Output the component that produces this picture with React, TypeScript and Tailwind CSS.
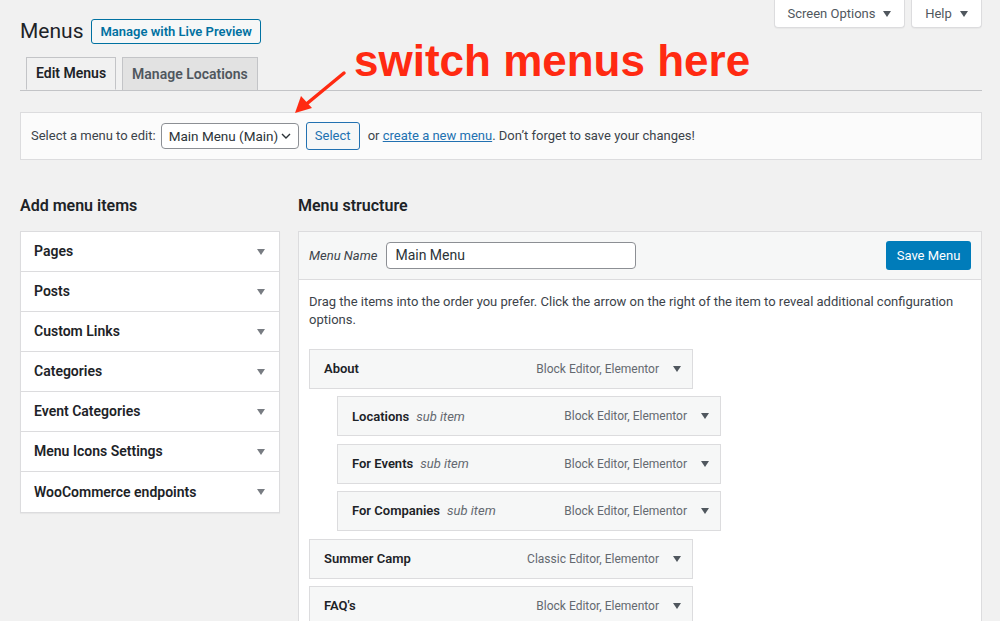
import React from 'react';

const ui = { fontFamily: 'Roboto, "Liberation Sans", Arial, sans-serif' };

const addItems = [
  'Pages',
  'Posts',
  'Custom Links',
  'Categories',
  'Event Categories',
  'Menu Icons Settings',
  'WooCommerce endpoints',
];

interface MenuItem {
  title: string;
  sub?: boolean;
  type: string;
}

const menuItems: MenuItem[] = [
  { title: 'About', type: 'Block Editor, Elementor' },
  { title: 'Locations', sub: true, type: 'Block Editor, Elementor' },
  { title: 'For Events', sub: true, type: 'Block Editor, Elementor' },
  { title: 'For Companies', sub: true, type: 'Block Editor, Elementor' },
  { title: 'Summer Camp', type: 'Classic Editor, Elementor' },
  { title: "FAQ's", type: 'Block Editor, Elementor' },
];

// small solid triangle used by WP toggles
const Caret = ({ className = '' }: { className?: string }) => (
  <svg width="8" height="6" viewBox="0 0 8 6" className={className}>
    <path d="M0 0h8L4 6z" fill="currentColor" />
  </svg>
);

const App = () => {
  return (
    <div className="relative h-[621px] overflow-hidden bg-[#f1f1f1] text-[#1d2327]" style={ui}>
      {/* header row */}
      <div className="flex items-start justify-between pl-[20px] pr-[18px]">
        <div className="flex items-center gap-[8px] pt-[19px]">
          <h1 className="text-[21px] leading-[25px] font-normal text-[#1d2327]">Menus</h1>
          <button className="h-[25px] rounded-[3px] border border-[#0071a1] bg-[#f6f7f7] px-[8px] text-[13px] font-semibold text-[#0071a1]">
            Manage with Live Preview
          </button>
        </div>
        <div className="flex gap-[6px]">
          <button className="flex h-[28px] w-[131px] items-center justify-center gap-[8px] rounded-b-[4px] border border-t-0 border-[#dcdcde] bg-white text-[13px] text-[#50575e] shadow-[0_1px_1px_rgba(0,0,0,0.04)]">
            Screen Options <Caret className="text-[#50575e]" />
          </button>
          <button className="flex h-[28px] w-[71px] items-center justify-center gap-[8px] rounded-b-[4px] border border-t-0 border-[#dcdcde] bg-white text-[13px] text-[#50575e] shadow-[0_1px_1px_rgba(0,0,0,0.04)]">
            Help <Caret className="text-[#50575e]" />
          </button>
        </div>
      </div>

      <div className="pl-[20px] pr-[18px]">
        {/* tabs */}
        <div className="mt-[13px] flex gap-[6px] border-b border-[#c3c4c7] pl-[6px]">
          <div className="-mb-px flex h-[33px] items-center border border-b-[#f1f1f1] border-[#c3c4c7] bg-[#f1f1f1] px-[9px] text-[14px] font-semibold text-[#1d2327]">
            Edit Menus
          </div>
          <div className="flex h-[33px] items-center border border-b-0 border-[#c3c4c7] bg-[#e2e2e2] px-[9px] text-[14px] font-semibold text-[#50575e]">
            Manage Locations
          </div>
        </div>

        {/* select bar */}
        <div className="mt-[21px] flex h-[48px] items-center whitespace-nowrap border border-[#dcdcde] bg-[#fbfbfb] px-[10px] text-[13px] text-[#3c434a]">
          <span>Select a menu to edit:</span>
          <div className="ml-[5px] flex h-[26px] w-[138px] items-center justify-between rounded-[4px] border border-[#8c8f94] bg-white pl-[7px] pr-[7px] text-[13.5px] text-[#2c3338]">
            <span>Main Menu (Main)</span>
            <svg width="10" height="6" viewBox="0 0 10 6">
              <path d="M1 1l4 4 4-4" stroke="#2c3338" strokeWidth="1.4" fill="none" />
            </svg>
          </div>
          <button className="ml-[7px] h-[28px] w-[54px] rounded-[3px] border border-[#2271b1] bg-[#f6f7f7] text-[13px] text-[#2271b1]">
            Select
          </button>
          <span className="ml-[8px]">
            or <a className="text-[#2271b1] underline">create a new menu</a>. Don’t forget to save your changes!
          </span>
        </div>

        {/* columns */}
        <div className="mt-[36px] flex gap-[18px]">
          <div className="w-[260px] shrink-0">
            <h2 className="h-[35px] text-[16px] leading-[20px] font-semibold">Add menu items</h2>
            <div className="border border-[#dcdcde] bg-white shadow-[0_1px_1px_rgba(0,0,0,0.04)]">
              {addItems.map((label, i) => (
                <div
                  key={label}
                  className={`flex h-[40px] items-center justify-between pl-[13px] pr-[14px] text-[14px] font-semibold ${
                    i < addItems.length - 1 ? 'border-b border-[#dcdcde]' : ''
                  }`}
                >
                  <span>{label}</span>
                  <Caret className="text-[#787c82]" />
                </div>
              ))}
            </div>
          </div>

          <div className="flex-1">
            <h2 className="h-[35px] text-[16px] leading-[20px] font-semibold">Menu structure</h2>
            <div className="h-[400px] border border-[#dcdcde] bg-white">
              <div className="flex h-[48px] items-center justify-between border-b border-[#dcdcde] bg-[#f6f7f7] px-[10px]">
                <div className="flex items-center">
                  <span className="text-[13px] italic text-[#3c434a]">Menu Name</span>
                  <div className="ml-[9px] flex h-[27px] w-[250px] items-center rounded-[4px] border border-[#8c8f94] bg-white px-[8px] text-[14px] text-[#2c3338]">
                    Main Menu
                  </div>
                </div>
                <button className="h-[29px] w-[85px] rounded-[3px] bg-[#007cba] text-[13px] text-white">Save Menu</button>
              </div>
              <div className="px-[10px] pt-[13px]">
                <p className="text-[13px] leading-[18px] text-[#3c434a]">
                  Drag the items into the order you prefer. Click the arrow on the right of the item to reveal additional configuration options.
                </p>
                <div className="mt-[20px] flex flex-col gap-[7.4px]">
                  {menuItems.map((item) => (
                    <div
                      key={item.title}
                      className={`flex h-[40px] w-[384px] shrink-0 items-center justify-between border border-[#dcdcde] bg-[#f6f7f7] pl-[14px] pr-[11px] ${
                        item.sub ? 'ml-[28px]' : ''
                      }`}
                    >
                      <span className="text-[13px] font-semibold text-[#1d2327]">
                        {item.title}
                        {item.sub && <span className="ml-[7px] font-normal italic text-[#646970]">sub item</span>}
                      </span>
                      <span className="flex items-center gap-[14px] text-[12px] text-[#646970]">
                        {item.type}
                        <Caret className="text-[#50575e]" />
                      </span>
                    </div>
                  ))}
                </div>
              </div>
            </div>
          </div>
        </div>
      </div>

      {/* annotation overlay */}
      <div
        className="absolute left-[354px] top-[33px] text-[44px] leading-[56px] font-bold text-[#ff2a12]"
        style={{ fontFamily: '"Liberation Sans", Arial, sans-serif' }}
      >
        switch menus here
      </div>
      <svg className="absolute left-[290px] top-[68px]" width="60" height="50" viewBox="0 0 60 50">
        <path d="M54 5L14 38" stroke="#ff2a12" strokeWidth="3.5" strokeLinecap="round" />
        <path d="M5 45l6-17 11 12z" fill="#ff2a12" />
      </svg>
    </div>
  );
};

export default App;
